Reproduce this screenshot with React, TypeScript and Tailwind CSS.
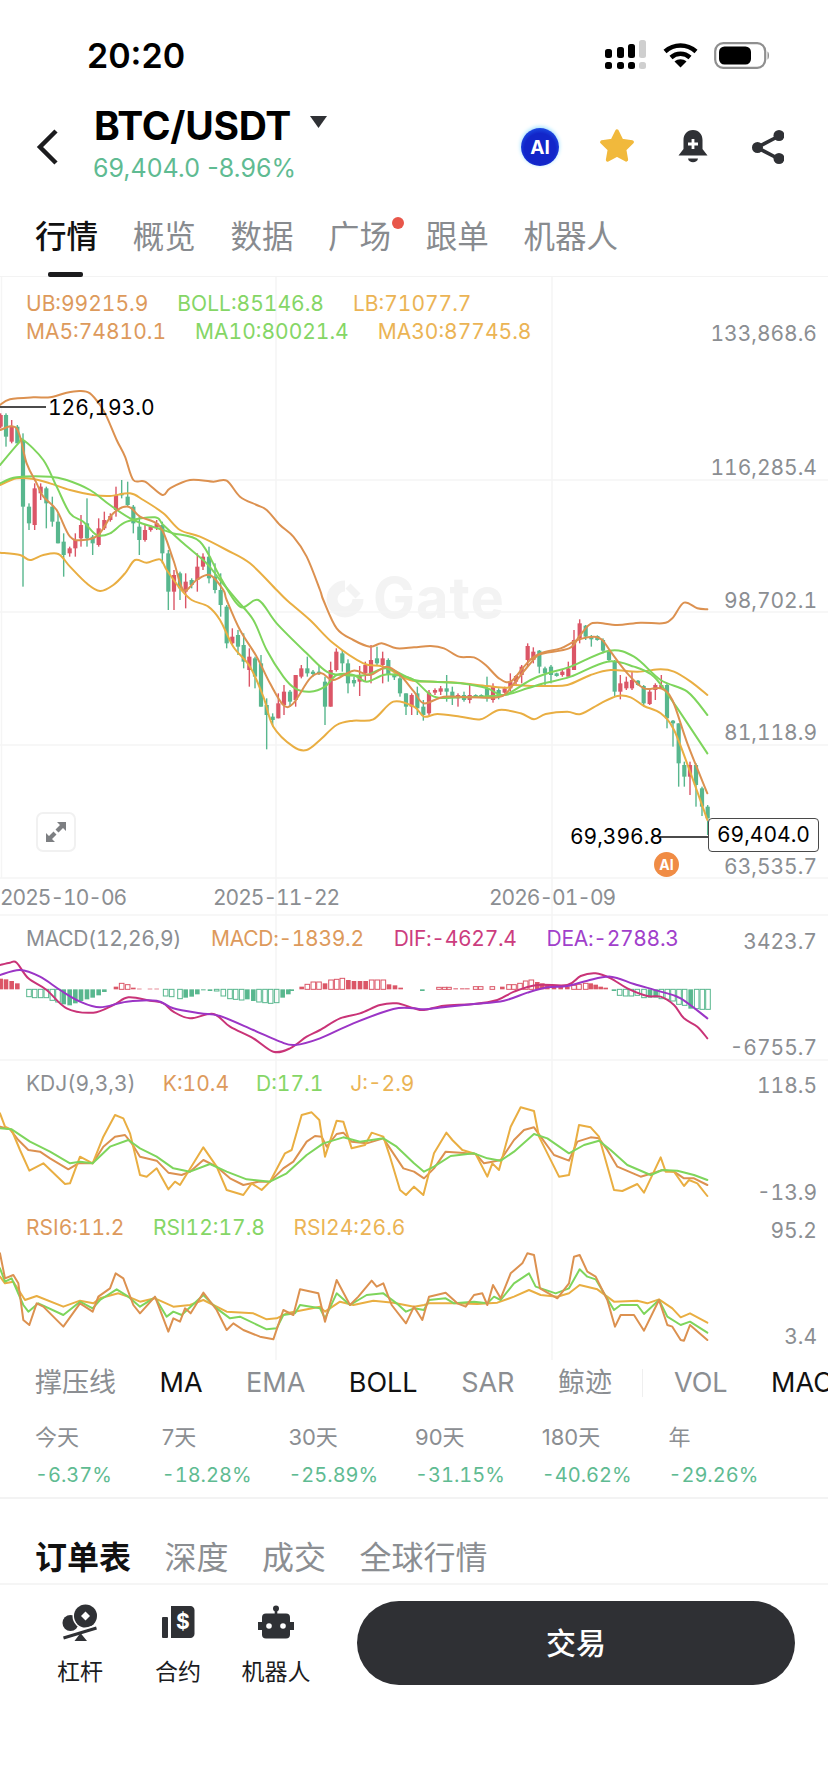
type Pt = [number, number];
// candle: [crop x, red?, wick top, wick bottom, body top, body bottom]
type Candle = [number, number, number, number, number, number];

// all series are read from 3x crops, so seg() maps crop coords back to page px
const seg = (s: string, ox: number, oy: number): Pt[] =>
  s
    .trim()
    .split(/\s+/)
    .map((p) => {
      const [x, y] = p.split(",").map(Number);
      return [ox + x / 3, oy + y / 3] as Pt;
    });

const smooth = (p: Pt[]) => {
  let d = `M${p[0][0]} ${p[0][1]}`;
  for (let i = 0; i < p.length - 1; i++) {
    const a = p[Math.max(i - 1, 0)];
    const b = p[i];
    const c = p[i + 1];
    const e = p[Math.min(i + 2, p.length - 1)];
    d += `C${b[0] + (c[0] - a[0]) / 6} ${b[1] + (c[1] - a[1]) / 6} ${c[0] - (e[0] - b[0]) / 6} ${c[1] - (e[1] - b[1]) / 6} ${c[0]} ${c[1]}`;
  }
  return d;
};
const straight = (p: Pt[]) => "M" + p.map((q) => q.join(" ")).join("L");

const ORANGE = "#dc9150";
const GREEN = "#7ed55c";
const GOLD = "#e9ae42";
const PINK = "#c93377";
const PURPLE = "#9b35c6";
const UP = "#db5667";
const DOWN = "#58b78e";

const ub = [
  ...seg("0,375 30,358 100,352 150,352 200,338 240,333 270,340 300,375 320,410 350,480 375,530 400,600 435,605 487,645 510,625 570,600 640,605 680,602 720,650 770,675 800,690 840,735 880,770 920,830 960,930", 0, 280),
  ...seg("970,0 1010,85 1060,120 1110,140 1145,130 1190,145 1242,142", 0, 600),
  ...seg("50,258 90,265 135,290 180,292 215,315 255,355 290,365 330,320 370,285 465,265 495,230 525,195 550,188 610,195 680,188 745,190 775,175 810,128 850,145 880,148", 414, 560),
];
const lb = [
  ...seg("0,818 60,825 90,840 130,825 175,822 210,860 260,910 300,933 340,915 375,880 405,840 440,848 480,838 500,870 540,925", 0, 280),
  ...seg("575,0 625,20 660,60 700,140 750,200 790,290 820,380 880,440 920,450 960,420 1010,375 1060,362 1120,358 1180,305 1242,320", 0, 600),
  ...seg("30,470 70,462 140,470 200,478 255,450 320,460 360,478 395,462 460,455 500,462 560,430 610,408 650,412 690,438 740,460 780,510 830,640 880,780", 414, 560),
];
const ma30 = [
  ...seg("0,615 50,595 100,597 150,610 210,630 280,645 330,648 390,640 430,660 490,700 540,750 600,770 680,810 750,850 830,930", 0, 280),
  ...seg("860,0 930,60 1000,130 1090,190 1150,200 1230,240", 0, 600),
  ...seg("60,365 130,368 220,378 280,383 300,375 350,378 400,378 460,375 530,345 590,330 670,335 740,328 780,335 830,365 880,405", 414, 560),
];
const boll = [
  ...seg("0,610 50,592 150,590 200,600 270,630 330,675 400,720 490,750 520,760 600,785 660,890 720,980", 0, 280),
  ...seg("775,0 830,70 920,160 980,215 1030,225 1100,225 1160,205 1242,240", 0, 600),
  ...seg("60,365 140,370 220,385 270,405 350,360 400,340 470,320 585,272 660,290 740,360 820,395 880,465", 414, 560),
];
const ma10 = [
  ...seg("0,555 55,490 70,480 130,540 170,620 210,700 250,725 290,765 330,760 380,725 465,712 490,735 550,790 620,850 660,900", 0, 280),
  ...seg("710,0 760,60 800,150 850,230 885,265 930,275 975,260 1010,225 1060,225 1100,245 1150,225 1190,225 1242,240", 0, 600),
  ...seg("60,410 140,412 270,405 340,385 390,370 470,350 580,305 660,320 720,350 780,430 880,580", 414, 560),
];
const ma5 = [
  ...seg("0,450 50,445 80,550 110,610 130,650 170,690 210,770 250,780 295,765 340,700 385,680 420,710 480,740 520,840 550,930 590,900 630,885 670,930", 0, 280),
  ...seg("680,0 720,90 770,170 810,250 850,315 880,310 930,235 965,220 1000,240 1060,212 1110,225 1160,200 1200,225 1242,275", 0, 600),
  ...seg("30,430 90,410 170,412 260,410 300,370 345,315 380,280 440,265 490,240 540,230 565,240 590,275 640,340 690,385 740,385 775,420 820,550 880,700", 414, 560),
];

const toCandles = (list: Candle[], ox: number, oy: number) =>
  list.map(([x, red, wt, wb, bt, bb]) => ({
    x: ox + x / 3,
    red: !!red,
    wt: oy + wt / 3,
    wb: oy + wb / 3,
    bt: oy + bt / 3,
    bb: oy + bb / 3,
  }));

const candles = [
  ...toCandles(
    [
      [2, 1, 400, 445, 405, 440], [18, 0, 400, 500, 405, 470], [35, 1, 420, 490, 440, 485], [52, 0, 435, 490, 440, 490],
      [69, 0, 460, 920, 480, 680], [87, 0, 670, 750, 680, 730], [104, 1, 610, 750, 625, 735], [122, 1, 610, 660, 620, 640],
      [139, 0, 620, 745, 625, 670], [157, 0, 650, 740, 680, 725], [174, 0, 700, 790, 725, 790], [191, 0, 760, 890, 785, 825],
      [209, 1, 800, 830, 805, 820], [226, 1, 760, 830, 780, 805], [243, 1, 705, 800, 735, 775], [261, 0, 655, 800, 730, 775],
      [278, 0, 765, 825, 770, 790], [296, 1, 715, 800, 745, 795], [313, 1, 695, 750, 720, 745], [331, 1, 700, 725, 708, 720],
      [348, 1, 620, 710, 645, 690], [365, 0, 600, 655, 640, 646], [383, 0, 605, 680, 650, 675], [400, 0, 675, 760, 680, 730],
      [418, 0, 710, 825, 740, 780], [435, 1, 735, 785, 750, 780], [452, 1, 735, 755, 740, 750], [470, 1, 720, 750, 730, 742],
      [487, 0, 725, 850, 735, 820], [505, 0, 810, 990, 820, 935], [522, 1, 870, 990, 885, 935], [540, 0, 875, 960, 880, 925],
      [557, 1, 880, 985, 905, 935], [575, 0, 895, 925, 900, 915], [592, 1, 820, 935, 860, 900], [609, 1, 820, 870, 830, 860],
      [627, 0, 800, 910, 830, 895], [645, 0, 850, 940, 890, 930], [662, 0, 880, 1010, 930, 975],
    ],
    0,
    280,
  ),
  ...toCandles(
    [
      [680, 0, 15, 145, 20, 130], [697, 1, 85, 135, 110, 130], [714, 0, 90, 165, 105, 140], [731, 0, 100, 205, 135, 185],
      [748, 1, 145, 260, 170, 210], [765, 0, 170, 265, 175, 230], [783, 0, 165, 320, 190, 320], [800, 0, 295, 448, 315, 345],
      [818, 0, 340, 380, 350, 360], [835, 1, 280, 355, 310, 355], [852, 1, 255, 345, 275, 315], [870, 0, 270, 320, 275, 305],
      [887, 1, 225, 320, 225, 300], [904, 1, 195, 235, 205, 230], [922, 0, 170, 230, 205, 220], [939, 0, 210, 230, 215, 222],
      [957, 0, 195, 225, 215, 222], [975, 0, 230, 375, 245, 320], [992, 1, 185, 320, 210, 320], [1009, 1, 145, 215, 155, 210],
      [1027, 0, 150, 215, 160, 190], [1044, 0, 178, 280, 190, 250], [1062, 0, 230, 260, 240, 250], [1079, 1, 198, 288, 228, 245],
      [1096, 1, 185, 245, 195, 220], [1113, 1, 135, 250, 180, 220], [1131, 0, 140, 195, 175, 190], [1148, 1, 155, 250, 175, 195],
      [1165, 0, 175, 245, 180, 225], [1183, 0, 220, 240, 225, 232], [1200, 0, 225, 290, 235, 280], [1218, 0, 280, 345, 280, 320],
      [1235, 1, 280, 345, 285, 320],
    ],
    0,
    600,
  ),
  ...toCandles(
    [
      [10, 0, 380, 465, 400, 445], [28, 0, 420, 482, 440, 465], [45, 1, 390, 465, 398, 460], [63, 1, 385, 405, 390, 398],
      [80, 1, 378, 405, 385, 395], [98, 0, 345, 425, 385, 395], [115, 0, 380, 435, 395, 410], [132, 1, 400, 440, 405, 415],
      [150, 0, 395, 425, 405, 420], [167, 1, 370, 430, 405, 420], [185, 0, 403, 414, 405, 412], [202, 0, 403, 414, 405, 412],
      [219, 0, 350, 425, 385, 415], [237, 1, 370, 428, 380, 420], [254, 0, 385, 418, 390, 410], [272, 1, 380, 400, 385, 398],
      [289, 1, 340, 395, 365, 385], [306, 1, 345, 375, 348, 365], [323, 1, 315, 370, 320, 345], [341, 1, 250, 320, 258, 300],
      [358, 1, 262, 310, 275, 300], [376, 0, 270, 340, 272, 320], [393, 0, 320, 375, 325, 340], [411, 0, 315, 370, 320, 345],
      [428, 0, 338, 350, 340, 348], [445, 1, 330, 350, 335, 345], [463, 1, 305, 350, 325, 350], [480, 1, 210, 330, 240, 330],
      [497, 1, 178, 250, 190, 235], [515, 0, 195, 240, 197, 230], [532, 0, 225, 260, 230, 238], [550, 0, 226, 242, 228, 240],
      [567, 0, 235, 280, 240, 272], [585, 0, 270, 305, 275, 300], [602, 0, 300, 410, 305, 395], [619, 1, 345, 418, 370, 395],
      [637, 1, 350, 390, 365, 385], [654, 1, 335, 390, 360, 385], [672, 0, 360, 377, 362, 375], [689, 0, 375, 440, 378, 430],
      [707, 1, 385, 435, 395, 432], [724, 1, 370, 420, 375, 390], [742, 1, 345, 385, 375, 385], [759, 0, 370, 505, 375, 475],
      [777, 0, 480, 560, 482, 490], [794, 0, 490, 680, 490, 610], [811, 0, 605, 680, 615, 650], [828, 1, 605, 705, 615, 650],
      [846, 0, 610, 740, 615, 675], [864, 0, 680, 768, 685, 740], [881, 0, 735, 825, 740, 775],
    ],
    414,
    560,
  ),
];

// macd bars: [crop x, height from zero, filled]
type Bar = [number, number, number];
const barsLeft: Bar[] = [
  [2, 32, 1], [18, 30, 1], [35, 25, 1], [52, 18, 1],
  [87, -22, 0], [104, -25, 0], [122, -25, 0], [139, -25, 0], [157, -33, 0], [174, -38, 0], [191, -45, 1], [209, -48, 1], [226, -42, 1], [243, -35, 1], [261, -30, 1], [278, -25, 1], [296, -18, 1], [313, -8, 1],
  [348, 8, 1], [365, 18, 0], [383, 14, 0], [400, 5, 1], [418, 2, 1], [450, 2, 1], [470, 2, 1],
  [497, -20, 0], [515, -22, 0], [540, -28, 0], [557, -25, 1], [575, -22, 1], [592, -15, 1], [610, -3, 1], [630, -5, 1], [650, -5, 0], [670, -20, 0], [690, -28, 0], [707, -30, 0], [725, -32, 0], [742, -30, 1], [760, -35, 1], [777, -38, 0], [795, -40, 0], [812, -42, 0], [830, -40, 0], [848, -25, 1], [865, -15, 1], [875, -5, 1],
  [905, 8, 1], [922, 15, 0], [940, 22, 0], [957, 22, 0], [975, 18, 1], [993, 28, 0], [1010, 30, 0], [1027, 33, 0], [1045, 28, 1], [1062, 25, 1], [1080, 25, 1], [1097, 25, 1], [1115, 28, 0], [1132, 28, 0], [1150, 28, 0], [1167, 15, 1], [1185, 12, 1], [1202, 5, 1],
];
const barsRight: Bar[] = [
  [25, -5, 1], [75, 6, 0], [92, 6, 0], [105, 6, 0], [125, 3, 1], [145, 3, 1], [160, 3, 1], [185, 8, 0], [200, 8, 0], [235, 8, 0], [265, 8, 1], [285, 14, 0], [300, 14, 0], [318, 18, 0], [335, 25, 0], [352, 28, 0],
  [370, 22, 1], [385, 18, 1], [400, 15, 1], [420, 8, 1], [440, 8, 1], [460, 8, 1], [480, 12, 0], [495, 15, 0], [515, 18, 0], [530, 18, 1], [545, 14, 1], [560, 8, 1], [575, 5, 1],
  [600, -5, 1], [617, -18, 0], [635, -20, 0], [652, -20, 0], [670, -18, 0], [690, -25, 0], [708, -25, 1], [725, -25, 1], [742, -28, 0], [760, -30, 0], [777, -35, 0], [795, -45, 0], [812, -48, 0], [830, -58, 1], [848, -58, 0], [865, -60, 0], [882, -60, 0],
];
const macdBars = [
  ...barsLeft.map(([x, h, f]) => ({ x: x / 3, h: h / 3, f })),
  ...barsRight.map(([x, h, f]) => ({ x: 414 + x / 3, h: h / 3, f })),
];
const ZERO = 910 + 238 / 3;

const dif = [
  ...seg("0,165 30,158 50,158 85,205 140,240 200,295 280,308 340,285 385,262 450,272 490,280 520,305 570,325 640,312 690,350 760,385 820,425 870,415 920,380 960,360 1020,325 1080,310 1140,285 1190,280 1242,295", 0, 910),
  ...seg("30,300 90,287 180,282 250,270 300,245 370,225 460,225 500,198 545,190 590,205 640,235 700,258 740,260 780,285 810,325 850,350 880,385", 414, 910),
];
const dea = [
  ...seg("0,195 60,180 120,200 180,240 240,275 300,292 380,275 470,272 520,295 600,310 660,318 760,360 840,395 885,405 960,385 1060,340 1180,297 1242,295", 0, 910),
  ...seg("30,298 100,290 180,282 270,272 340,248 400,232 460,228 520,212 590,200 660,222 740,245 800,265 880,325", 414, 910),
];

const kdj = [
  {
    c: ORANGE,
    p: [
      ...seg("0,650 30,658 55,690 85,720 120,725 150,745 205,778 235,760 278,760 310,710 345,680 375,675 395,700 420,740 470,752 505,788 545,795 570,785 610,750 650,770 690,805 730,825 775,815 810,815 850,775 880,755 920,695 945,678 965,680 980,710 1010,672 1030,668 1055,695 1100,700 1150,685 1180,730 1210,775 1242,785", 0, 910),
      ...seg("30,805 60,775 95,725 140,728 185,732 210,760 235,755 260,750 300,690 330,660 360,652 380,680 420,735 465,752 490,695 530,682 555,685 580,720 610,770 680,800 715,790 745,780 780,785 810,805 840,805 880,825", 414, 910),
    ],
  },
  {
    c: GOLD,
    p: [
      ...seg("0,610 15,650 35,660 60,720 88,782 130,760 195,822 210,820 240,740 278,760 310,680 345,615 370,625 390,670 420,795 440,800 470,775 505,838 525,815 540,825 610,712 650,770 680,840 730,855 755,820 785,840 810,815 855,730 875,720 905,615 935,607 958,630 975,740 1010,632 1030,635 1055,715 1095,705 1115,668 1150,680 1170,740 1200,840 1218,855 1242,830", 0, 910),
      ...seg("28,855 60,730 97,668 115,690 145,720 185,732 220,800 235,760 255,780 290,650 320,592 360,603 375,680 435,800 465,795 495,645 530,652 555,680 600,840 625,843 670,822 690,848 740,742 755,785 780,785 810,828 825,810 850,820 880,858", 414, 910),
    ],
  },
  {
    c: GREEN,
    p: [
      ...seg("0,655 35,658 90,695 150,725 210,760 240,755 278,760 330,710 385,690 420,715 470,740 520,775 570,785 630,762 680,785 740,808 810,815 860,790 920,735 970,700 1030,682 1080,695 1150,685 1190,710 1242,760", 0, 910),
      ...seg("30,785 60,770 110,738 180,730 220,745 260,752 300,725 360,672 400,685 465,730 510,705 555,692 590,720 640,765 710,795 745,780 790,782 840,795 880,810", 414, 910),
    ],
  },
];
const rsi = [
  {
    c: GOLD,
    p: [
      ...seg("0,1100 15,1120 40,1115 75,1170 110,1158 190,1190 240,1172 280,1180 300,1165 355,1150 390,1162 420,1175 465,1165 520,1190 570,1185 610,1170 680,1205 760,1210 800,1228 830,1225 860,1210 960,1190 975,1205 1020,1175 1060,1185 1120,1172 1180,1178 1242,1190", 0, 910),
      ...seg("30,1185 45,1180 120,1180 190,1182 250,1178 300,1160 345,1140 380,1155 430,1160 465,1150 497,1125 550,1138 600,1175 670,1172 700,1180 735,1168 775,1195 800,1222 828,1210 880,1238", 414, 910),
    ],
  },
  {
    c: GREEN,
    p: [
      ...seg("0,1075 15,1115 35,1105 70,1185 85,1205 115,1180 190,1215 240,1175 278,1195 300,1170 350,1138 385,1160 420,1190 465,1162 500,1220 520,1205 545,1215 610,1155 650,1195 690,1225 720,1220 800,1258 830,1255 850,1215 885,1210 900,1185 960,1195 975,1225 1010,1150 1050,1185 1100,1155 1150,1150 1190,1180 1218,1205 1242,1195", 0, 910),
      ...seg("30,1200 45,1170 95,1165 120,1180 180,1175 220,1180 240,1160 260,1170 300,1120 345,1090 365,1130 425,1150 465,1135 497,1078 520,1100 545,1108 600,1200 620,1185 670,1185 690,1212 735,1170 760,1220 800,1245 828,1235 880,1268", 414, 910),
    ],
  },
  {
    c: ORANGE,
    p: [
      ...seg("0,1030 15,1105 40,1095 55,1120 70,1230 88,1245 110,1180 130,1190 190,1250 240,1180 278,1205 295,1160 330,1135 347,1090 370,1105 400,1185 420,1210 465,1160 505,1265 520,1225 540,1235 555,1195 572,1210 610,1148 650,1200 680,1260 700,1240 730,1260 780,1280 820,1288 850,1200 880,1215 900,1138 955,1150 975,1235 1010,1110 1050,1185 1075,1160 1115,1112 1130,1130 1150,1120 1175,1185 1218,1240 1242,1190", 0, 910),
      ...seg("25,1230 45,1160 95,1148 130,1180 155,1190 180,1155 205,1150 220,1185 237,1125 260,1165 290,1090 325,1060 340,1030 360,1035 378,1135 430,1165 465,1120 480,1040 497,1035 520,1085 545,1100 580,1170 603,1250 620,1215 660,1215 690,1262 735,1170 760,1245 775,1250 800,1290 810,1292 828,1245 880,1290", 414, 910),
    ],
  },
];

const ChartDrawing = () => (
  <svg viewBox="0 277 828 1083" width={828} height={1083} fill="none" className="absolute inset-0">
    <g stroke="#f5f5f5" strokeWidth="1.5">
      <path d="M0 480H828M0 612H828M0 745H828M0 878H828M0 915H828M0 1060H828" />
      <path d="M276 277V1360M552 277V1360M1.5 277V878" />
    </g>

    {candles.map((c, i) => {
      const col = c.red ? UP : DOWN;
      return (
        <g key={i} fill={col}>
          <rect x={c.x - 0.7} y={c.wt} width={1.4} height={c.wb - c.wt} />
          <rect x={c.x - 2.1} y={c.bt} width={4.2} height={c.bb - c.bt} />
        </g>
      );
    })}
    <g strokeWidth="2" strokeLinejoin="round" strokeLinecap="round">
      <path d={smooth(ub)} stroke={ORANGE} />
      <path d={smooth(lb)} stroke={GOLD} />
      <path d={smooth(ma30)} stroke={GOLD} />
      <path d={smooth(boll)} stroke={GREEN} />
      <path d={smooth(ma10)} stroke={GREEN} />
      <path d={smooth(ma5)} stroke={ORANGE} />
    </g>

    {/* price markers */}
    <path d="M0 407H46M660 837H708" stroke="#111" strokeWidth="1.5" />

    {macdBars.map((b, i) => {
      const col = b.h > 0 ? UP : DOWN;
      const y = b.h > 0 ? ZERO - b.h : ZERO;
      const h = Math.abs(b.h);
      return b.f ? (
        <rect key={i} x={b.x - 2.3} y={y} width={4.6} height={h} fill={col} />
      ) : (
        <rect key={i} x={b.x - 2.3} y={y} width={4.6} height={h} stroke={col} strokeWidth="1" />
      );
    })}
    <g strokeWidth="2" strokeLinejoin="round" strokeLinecap="round">
      <path d={smooth(dif)} stroke={PINK} />
      <path d={smooth(dea)} stroke={PURPLE} />
      {kdj.map((l) => (
        <path key={l.c} d={straight(l.p)} stroke={l.c} />
      ))}
      {rsi.map((l) => (
        <path key={l.c} d={straight(l.p)} stroke={l.c} />
      ))}
    </g>
  </svg>
);

const Signal = () => (
  <svg width="42" height="30" viewBox="0 0 42 30">
    <g fill="#000">
      <rect x="0" y="9" width="7" height="9" rx="2.5" />
      <rect x="12" y="7" width="7" height="11" rx="2.5" />
      <rect x="23" y="4" width="7" height="14" rx="2.5" />
      <rect x="0" y="22" width="7" height="7" rx="2.5" />
      <rect x="12" y="22" width="7" height="7" rx="2.5" />
      <rect x="23" y="22" width="7" height="7" rx="2.5" />
    </g>
    <rect x="34" y="0" width="7" height="18" rx="2.5" fill="#cfcfcf" />
    <rect x="34" y="22" width="7" height="7" rx="2.5" fill="#cfcfcf" />
  </svg>
);

const Wifi = () => (
  <svg width="35" height="26" viewBox="0 0 35 26" fill="none" stroke="#000" strokeWidth="4.5">
    <path d="M2 9.5C11 1.5 24 1.5 33 9.5" />
    <path d="M8 15.5C13.5 10.5 21.5 10.5 27 15.5" />
    <path d="M17.5 25.5L11.5 19.5C15 16.5 20 16.5 23.5 19.5Z" fill="#000" stroke="none" />
  </svg>
);

const Battery = () => (
  <svg width="56" height="27" viewBox="0 0 56 27">
    <rect x="1.2" y="1.2" width="50" height="24.6" rx="8" fill="#fff" stroke="#8f8f8f" strokeWidth="2.2" />
    <rect x="5" y="4.5" width="32" height="18" rx="5.5" fill="#000" />
    <path d="M53.5 9.5C55.5 10.5 55.5 16.5 53.5 17.5Z" fill="#8f8f8f" />
  </svg>
);

const HeaderIcons = () => (
  <div className="flex items-center ml-auto pr-[44px]">
    <div className="relative w-[38px] h-[38px] rounded-full bg-[radial-gradient(circle_at_50%_55%,#1226c9_55%,#1f5cf0_85%)] shadow-[0_-1px_4px_#8fdcff] flex items-center justify-center mr-[38px]">
      <span className="text-white text-[19px] font-bold leading-none">AI</span>
    </div>
    <svg width="40" height="40" viewBox="0 0 40 40" className="mr-[41px]">
      <path
        d="M20 4L24.7 13.5L35.2 15.1L27.6 22.5L29.4 32.9L20 28L10.6 32.9L12.4 22.5L4.8 15.1L15.3 13.5Z"
        fill="#f1b93c"
        stroke="#f1b93c"
        strokeWidth="3.5"
        strokeLinejoin="round"
      />
    </svg>
    <svg width="30" height="34" viewBox="0 0 30 34" className="mr-[44px]">
      <path d="M15 0C21 0 24.5 4.5 24.5 10V19L29.5 25.5H0.5L5.5 19V10C5.5 4.5 9 0 15 0Z" fill="#2f3135" />
      <path d="M10 28.5H20C19.5 33.5 10.5 33.5 10 28.5Z" fill="#2f3135" />
      <path d="M15 9V19M10 14H20" stroke="#fff" strokeWidth="2.8" />
    </svg>
    <svg width="32" height="34" viewBox="0 0 32 34">
      <path d="M27 6L5 17.5L27 29" fill="none" stroke="#2f3135" strokeWidth="3.6" />
      <circle cx="27" cy="5.5" r="5.5" fill="#2f3135" />
      <circle cx="5.5" cy="17.5" r="5.5" fill="#2f3135" />
      <circle cx="27" cy="28.5" r="5.5" fill="#2f3135" />
    </svg>
  </div>
);

const LeverIcon = () => (
  <svg width="38" height="38" viewBox="0 0 38 38">
    <circle cx="9.5" cy="19" r="8" fill="#2f3135" />
    <circle cx="24.5" cy="12" r="13" fill="#fff" />
    <circle cx="24.5" cy="12" r="11.5" fill="#2f3135" />
    <path d="M24.5 7.5L29 12L24.5 16.5L20 12Z" fill="#fff" />
    <path d="M2.5 34L35.5 24" stroke="#fff" strokeWidth="7" />
    <path d="M2.5 34L35.5 24" stroke="#2f3135" strokeWidth="3" />
    <path d="M13.5 37L19.5 29L26 37Z" fill="#2f3135" />
  </svg>
);

const ContractIcon = () => (
  <svg width="36" height="38" viewBox="0 0 36 38">
    <rect x="2" y="13" width="6" height="21" rx="1" fill="#2f3135" />
    <path d="M11 2H30.5C32.5 2 34.5 4 34.5 6V30C34.5 32 32.5 34 30.5 34H11Z" fill="#2f3135" />
    <text x="22.8" y="25" textAnchor="middle" fontSize="21" fontWeight="700" fill="#fff">
      $
    </text>
  </svg>
);

const RobotIcon = () => (
  <svg width="38" height="38" viewBox="0 0 38 38">
    <circle cx="19" cy="4.5" r="3" fill="#2f3135" />
    <rect x="17.7" y="5" width="2.6" height="6" fill="#2f3135" />
    <rect x="5" y="9.5" width="28" height="25" rx="4" fill="#2f3135" />
    <rect x="1" y="18" width="5" height="8" fill="#2f3135" />
    <rect x="32" y="18" width="5" height="8" fill="#2f3135" />
    <circle cx="12" cy="22" r="2.8" fill="#fff" />
    <circle cx="26" cy="22" r="2.8" fill="#fff" />
  </svg>
);

const GRAY = "text-[#8b8e92]";

const App = () => {
  return (
    <div className="w-[828px] h-[1792px] bg-white overflow-hidden flex flex-col font-[Inter,'Noto_Sans_CJK_SC',sans-serif] text-[#111]">
      {/* status bar */}
      <div className="h-[105px] pt-[5px] pl-[87px] pr-[58px] flex items-center justify-between">
        <div className="text-[34px] font-semibold text-black">20:20</div>
        <div className="flex items-center gap-[16px]">
          <Signal />
          <Wifi />
          <Battery />
        </div>
      </div>

      {/* header */}
      <div className="h-[84px] flex items-center pl-[35px]">
        <svg width="24" height="36" viewBox="0 0 24 36" fill="none" stroke="#1c1c1e" strokeWidth="4.5" className="mr-[35px]">
          <path d="M21 2L5 18L21 34" />
        </svg>
        <div>
          <div className="flex items-center h-[42px] text-[39px] font-bold text-black tracking-[-0.3px]">
            BTC/USDT
            <svg width="17" height="12" viewBox="0 0 17 12" className="ml-[19px] mt-[-8px]">
              <path d="M0 0H17L8.5 12Z" fill="#2f3135" />
            </svg>
          </div>
          <div className="h-[42px] leading-[42px] text-[25px] text-[#5fbb92] whitespace-nowrap ml-[-1px]">69,404.0 -8.96%</div>
        </div>
        <HeaderIcons />
      </div>

      {/* main tabs */}
      <div className="relative h-[88px] pt-[30px] pl-[35px] border-b border-[#f3f3f3] flex gap-[34.7px] text-[31.5px] leading-[36px] text-[#888b8f]">
        <span className="font-medium text-[#111]">行情</span>
        <span>概览</span>
        <span>数据</span>
        <span className="relative">
          广场
          <span className="absolute right-[-13px] top-[-2px] w-[12px] h-[12px] rounded-full bg-[#e8564a]" />
        </span>
        <span>跟单</span>
        <span>机器人</span>
        <span className="absolute left-[48px] bottom-[-1px] w-[35px] h-[5px] rounded-[2px] bg-[#1c1c1e]" />
      </div>

      {/* chart area */}
      <div className="relative h-[1083px] text-[21px] tabular-nums leading-[24px] whitespace-nowrap">
        <div className="absolute left-[325px] top-[293px] flex items-center gap-[8px] text-[#f3f3f3] text-[56px] font-bold tracking-[1px] leading-[56px]">
          <svg width="40" height="40" viewBox="0 0 40 40" fill="none">
            <path d="M20 8A13 13 0 1 0 33 21" stroke="#f3f3f3" strokeWidth="11" />
            <path d="M23 8L33 18" stroke="#f3f3f3" strokeWidth="7" />
          </svg>
          Gate
        </div>
        <ChartDrawing />

        <div className="absolute left-[26px] top-[15px] flex gap-[29px]">
          <span className="text-[#dd9a5c]">UB:99215.9</span>
          <span className="text-[#85d666]">BOLL:85146.8</span>
          <span className="text-[#ebb455]">LB:71077.7</span>
        </div>
        <div className="absolute left-[26px] top-[43px] flex gap-[29px]">
          <span className="text-[#dd9a5c]">MA5:74810.1</span>
          <span className="text-[#85d666]">MA10:80021.4</span>
          <span className="text-[#ebb455]">MA30:87745.8</span>
        </div>

        <span className="absolute left-[48px] top-[119px] text-black">126,193.0</span>
        <span className="absolute left-[570px] top-[548px] text-black">69,396.8</span>
        <div className="absolute left-[708px] top-[541px] w-[111px] h-[34px] border border-[#4a4a4a] rounded-[4px] bg-white flex items-center justify-center text-black">
          69,404.0
        </div>
        <div className="absolute left-[654px] top-[575px] w-[25px] h-[25px] rounded-full bg-[#f08c45] flex items-center justify-center text-white text-[14px] font-bold">
          AI
        </div>

        <div className="absolute left-[36px] top-[535px] w-[40px] h-[40px] rounded-[7px] border-2 border-[#f1f1f1] flex items-center justify-center">
          <svg width="20" height="20" viewBox="0 0 20 20" fill="#7d7f82">
            <path d="M11 0H20V9L17 6L12.5 10.5L9.5 7.5L14 3Z" />
            <path d="M9 20H0V11L3 14L7.5 9.5L10.5 12.5L6 17Z" />
          </svg>
        </div>

        <div className={`absolute right-[11px] top-[45px] ${GRAY}`}>133,868.6</div>
        <div className={`absolute right-[11px] top-[179px] ${GRAY}`}>116,285.4</div>
        <div className={`absolute right-[11px] top-[312px] ${GRAY}`}>98,702.1</div>
        <div className={`absolute right-[11px] top-[444px] ${GRAY}`}>81,118.9</div>
        <div className={`absolute right-[11px] top-[578px] ${GRAY}`}>63,535.7</div>

        <span className={`absolute left-[0px] top-[609px] tracking-[-1px] ${GRAY}`}>2025-10-06</span>
        <span className={`absolute left-[213px] top-[609px] tracking-[-1px] ${GRAY}`}>2025-11-22</span>
        <span className={`absolute left-[489px] top-[609px] tracking-[-1px] ${GRAY}`}>2026-01-09</span>

        <div className="absolute left-[26px] top-[650px] flex gap-[30px] tracking-[-0.3px]">
          <span className={GRAY}>MACD(12,26,9)</span>
          <span className="text-[#dd9a5c]">MACD:-1839.2</span>
          <span className="text-[#cc3d7e]">DIF:-4627.4</span>
          <span className="text-[#a13fcb]">DEA:-2788.3</span>
        </div>
        <div className={`absolute right-[11px] top-[653px] ${GRAY}`}>3423.7</div>
        <div className={`absolute right-[11px] top-[759px] ${GRAY}`}>-6755.7</div>

        <div className="absolute left-[26px] top-[795px] flex gap-[27px]">
          <span className={GRAY}>KDJ(9,3,3)</span>
          <span className="text-[#dd9a5c]">K:10.4</span>
          <span className="text-[#85d666]">D:17.1</span>
          <span className="text-[#ebb455]">J:-2.9</span>
        </div>
        <div className={`absolute right-[11px] top-[797px] ${GRAY}`}>118.5</div>
        <div className={`absolute right-[11px] top-[904px] ${GRAY}`}>-13.9</div>

        <div className="absolute left-[26px] top-[939px] flex gap-[28.5px]">
          <span className="text-[#dd9a5c]">RSI6:11.2</span>
          <span className="text-[#85d666]">RSI12:17.8</span>
          <span className="text-[#ebb455]">RSI24:26.6</span>
        </div>
        <div className={`absolute right-[11px] top-[942px] ${GRAY}`}>95.2</div>
        <div className={`absolute right-[11px] top-[1048px] ${GRAY}`}>3.4</div>
      </div>

      {/* indicator row */}
      <div className="h-[46px] pl-[35px] flex items-center gap-[43.5px] overflow-hidden whitespace-nowrap text-[27px] text-[#8b8e92]">
        <span>撑压线</span>
        <span className="text-[#111]">MA</span>
        <span>EMA</span>
        <span className="text-[#111]">BOLL</span>
        <span>SAR</span>
        <span>鲸迹</span>
        <span className="w-[1px] h-[28px] bg-[#efefef] mx-[-13px] shrink-0" />
        <span>VOL</span>
        <span className="text-[#111]">MACD</span>
      </div>

      {/* change over periods */}
      <div className="pt-[19px] pb-[10px] pl-[35px] border-b-2 border-[#f3f3f3] grid grid-cols-[repeat(6,126.7px)] leading-[24px] whitespace-nowrap">
        {[
          ["今天", "-6.37%"],
          ["7天", "-18.28%"],
          ["30天", "-25.89%"],
          ["90天", "-31.15%"],
          ["180天", "-40.62%"],
          ["年", "-29.26%"],
        ].map(([label, val]) => (
          <div key={label}>
            <div className="text-[22px] text-[#8b8e92]">{label}</div>
            <div className="mt-[14px] text-[20px] tabular-nums text-[#5fbb92]">{val}</div>
          </div>
        ))}
      </div>

      {/* book tabs */}
      <div className="pt-[41px] pb-[7px] pl-[35px] border-b-2 border-[#f5f5f5] flex gap-[33.5px] text-[32px] leading-[36px] text-[#8b8e92]">
        <span className="font-bold text-[#111]">订单表</span>
        <span>深度</span>
        <span>成交</span>
        <span>全球行情</span>
      </div>

      {/* bottom actions */}
      <div className="pl-[31px] flex items-start">
        <div className="flex pt-[19px] text-[23px] leading-[28px] text-[#1c1c1e] whitespace-nowrap">
          {[
            { label: "杠杆", icon: <LeverIcon /> },
            { label: "合约", icon: <ContractIcon /> },
            { label: "机器人", icon: <RobotIcon /> },
          ].map((it) => (
            <div key={it.label} className="w-[98px] flex flex-col items-center">
              <div className="h-[38px] flex items-center">{it.icon}</div>
              <div className="mt-[16px]">{it.label}</div>
            </div>
          ))}
        </div>
        <button className="ml-[32px] mt-[16px] w-[438px] h-[84px] rounded-full bg-[#2f3034] text-white text-[30px] font-medium">
          交易
        </button>
      </div>
    </div>
  );
};

export default App;
